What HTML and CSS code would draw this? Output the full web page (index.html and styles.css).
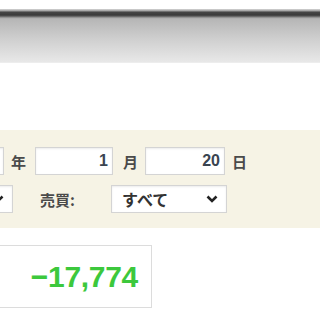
FILE: index.html
```html
<!DOCTYPE html>
<html lang="ja">
<head>
<meta charset="utf-8">
<link rel="stylesheet" href="styles.css">
</head>
<body>
<div class="topbar"></div>
<div class="spacer"></div>
<div class="panel">
  <div class="row row1">
    <span class="field f0">2016</span>
    <span class="lbl l-year">年</span>
    <span class="field f1">1</span>
    <span class="lbl l-month">月</span>
    <span class="field f2">20</span>
    <span class="lbl l-day">日</span>
  </div>
  <div class="row row2">
    <span class="sel s0"><span class="opt"></span><svg class="chev" width="12" height="8" viewBox="0 0 12 8"><path d="M1.5 1.5 L6 6 L10.5 1.5" fill="none" stroke="#222" stroke-width="2.6"/></svg></span>
    <span class="lbl l-trade">売買:</span>
    <span class="sel s1"><span class="opt">すべて</span><svg class="chev" width="12" height="8" viewBox="0 0 12 8"><path d="M1.5 1.5 L6 6 L10.5 1.5" fill="none" stroke="#222" stroke-width="2.6"/></svg></span>
  </div>
</div>
<div class="result">
  <div class="total">−17,774</div>
</div>
</body>
</html>
```
FILE: styles.css
```css
html, body {
  margin: 0;
  padding: 0;
  background: #ffffff;
  overflow: hidden;
  font-family: "Noto Sans CJK JP", "Liberation Sans", sans-serif;
}
.topbar {
  margin-top: 9px;
  height: 54px;
  background: linear-gradient(to bottom,
    #d8d8d8 0px, #9a9a9a 2px, #474747 3px, #3a3a3a 6px, #555555 7px,
    #a8a8a8 9px, #b6b6b6 10px, #cfcfcf 30px, #e8e8e8 53px, #f2f2f2 54px);
}
.spacer {
  height: 67px;
}
.panel {
  background: #f6f3e5;
  height: 98px;
  box-sizing: border-box;
  padding-top: 17px;
  overflow: hidden;
}
.row {
  display: flex;
  align-items: center;
  height: 28px;
  white-space: nowrap;
}
.row2 {
  margin-top: 10px;
}
.field, .sel {
  box-sizing: border-box;
  height: 28px;
  background: #ffffff;
  border: 1px solid #d4d4d4;
  box-shadow: inset 0 1px 2px rgba(0,0,0,0.08);
  display: flex;
  align-items: center;
  flex: none;
}
.field {
  justify-content: flex-end;
  padding-right: 4px;
  font-size: 16px;
  color: #3a4450;
  font-family: "Liberation Sans", sans-serif;
  font-weight: bold;
}
.lbl {
  font-size: 15px;
  color: #4a4a4a;
  font-weight: bold;
  flex: none;
}
.f0 { width: 60px; margin-left: -56px; color: #5a7fb0; }
.l-year { margin-left: 7px; width: 16px; }
.f1 { width: 78px; margin-left: 8px; }
.l-month { margin-left: 10px; width: 16px; }
.f2 { width: 80px; margin-left: 6px; }
.l-day { margin-left: 7px; width: 16px; }

.sel {
  justify-content: space-between;
  padding: 0 8px 0 10px;
}
.opt {
  font-size: 16px;
  color: #333333;
  font-weight: bold;
}
.s0 { width: 73px; margin-left: -60px; }
.l-trade { margin-left: 27px; width: 48px; }
.s1 { width: 116px; margin-left: 23px; }
.chev { display: block; }

.result {
  margin-top: 17px;
  margin-left: -40px;
  width: 192px;
  height: 63px;
  box-sizing: border-box;
  border: 1px solid #dcdcdc;
  background: #ffffff;
  display: flex;
  align-items: center;
  justify-content: flex-end;
  padding-right: 13px;
}
.total {
  font-family: "Liberation Sans", sans-serif;
  font-weight: bold;
  font-size: 30px;
  color: #3cc83c;
  letter-spacing: -0.3px;
}
```
